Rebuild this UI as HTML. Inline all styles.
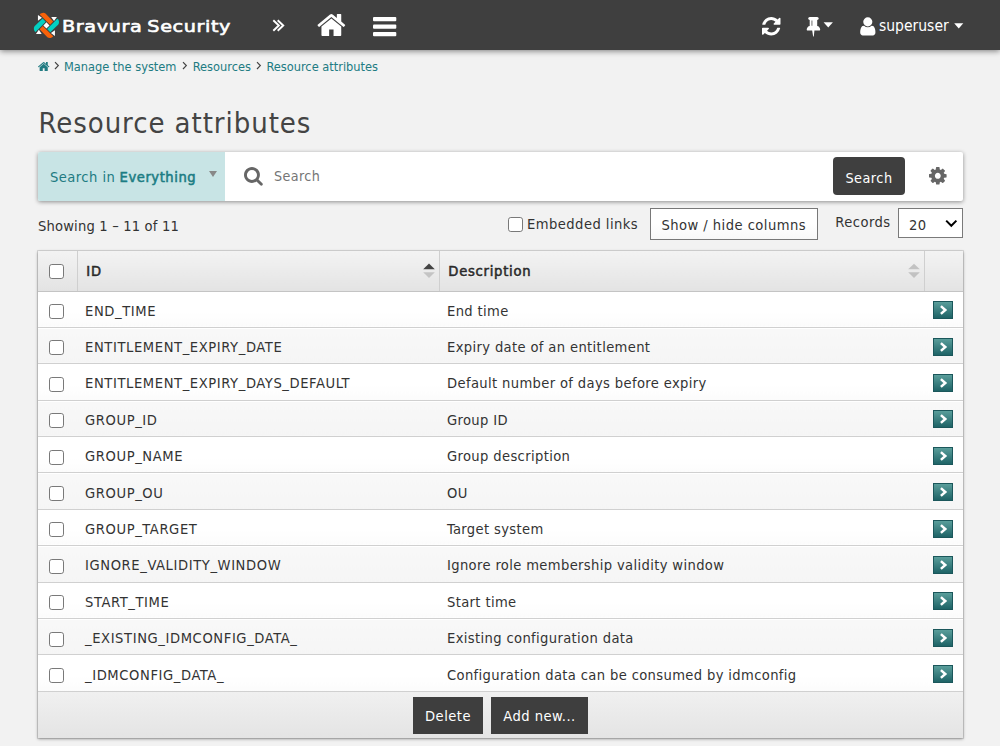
<!DOCTYPE html>
<html lang="en">
<head>
<meta charset="utf-8">
<title>Resource attributes</title>
<style>
*{box-sizing:border-box}
html,body{margin:0;padding:0}
body{width:1000px;height:746px;overflow:hidden;background:#f2f2f2;color:#333;
  font-family:"DejaVu Sans Condensed","Liberation Sans","DejaVu Sans",sans-serif;font-size:14.6px;letter-spacing:.45px;position:relative}
a{color:#217b82;text-decoration:none}
/* ---------- top bar ---------- */
#topbar{position:absolute;left:0;top:0;width:1000px;height:50px;background:#3f3f3f;box-shadow:0 1px 6px rgba(0,0,0,.5);z-index:5}
#topbar svg{position:absolute;left:0;top:0}
#brand{position:absolute;left:62px;top:12.5px;font-family:"DejaVu Sans","Liberation Sans",sans-serif;font-weight:normal;font-size:16.2px;line-height:28px;color:#fff;white-space:nowrap;letter-spacing:.5px;word-spacing:-1.4px;transform-origin:0 50%;transform:scaleX(1.188);-webkit-text-stroke:.62px #fff}
#user{position:absolute;left:879px;top:13.7px;font-size:15.5px;line-height:24px;color:#fff;white-space:nowrap;letter-spacing:0}
/* ---------- breadcrumb ---------- */
#crumbs{position:absolute;left:38px;top:56.6px;height:20px;line-height:20px;font-size:12.7px;white-space:nowrap;color:#444;letter-spacing:0}
#crumbs a{position:absolute;top:0}
#crumbs svg{position:absolute}
h1{position:absolute;left:38.5px;top:100.5px;margin:0;font-weight:normal;font-size:29px;line-height:44px;color:#444;white-space:nowrap;letter-spacing:.93px}
/* ---------- search ---------- */
#search{position:absolute;left:38px;top:152px;width:925px;height:48.5px;background:#fff;box-shadow:0 1px 4px rgba(0,0,0,.42);border-radius:2px}
#scope{position:absolute;left:0;top:0;width:187px;height:48.5px;background:#c8e4e5;color:#217b82;line-height:50.5px;padding-left:12px;white-space:nowrap;border-radius:2px 0 0 2px}
#scope b{font-weight:normal;-webkit-text-stroke:.55px #1c7d84;color:#1c7d84;letter-spacing:.55px;margin-left:-.3px}
#scope i{position:absolute;left:170.8px;top:19.4px;width:0;height:0;border-left:4.7px solid transparent;border-right:4.7px solid transparent;border-top:6.7px solid #888}
#q{position:absolute;left:236px;top:11.8px;line-height:24px;color:#757575;font-size:14.2px;letter-spacing:.4px}
#sbtn{position:absolute;left:795px;top:5px;width:72px;height:38px;background:#3f3f3f;color:#fff;border-radius:4px;text-align:center;line-height:38px;padding-top:2.2px;font-size:14.3px;letter-spacing:.5px}
#search svg{position:absolute}
/* ---------- toolbar ---------- */
#showing{position:absolute;left:38px;top:214px;line-height:24px;white-space:nowrap;letter-spacing:.17px}
#emb{position:absolute;left:508px;top:212px;line-height:24px;white-space:nowrap}
#emb i{display:inline-block;width:15px;height:15px;border:1.5px solid #797979;border-radius:2.8px;background:#fff;vertical-align:-3px;margin-right:4.5px;margin-left:-.5px}
#cols{position:absolute;left:650px;top:208px;width:167.5px;height:31.6px;border:1px solid #787878;background:linear-gradient(#fff 50%,#f8f8f8);text-align:center;line-height:29px;padding-top:1px;white-space:nowrap}
#rec{position:absolute;left:835.3px;top:210px;line-height:24px}
#sel{position:absolute;left:898px;top:208px;width:65px;height:30px;border:1px solid #7a7a7a;background:#fff;line-height:31px;padding-left:10px}
#sel svg{position:absolute;left:46px;top:10.3px}
/* ---------- table ---------- */
#grid{position:absolute;left:38px;top:251px;width:925px;height:487px;background:#fff;box-shadow:0 0 0 1px rgba(0,0,0,.1),0 1px 3px rgba(0,0,0,.38);display:flex;flex-direction:column}
table{border-collapse:collapse;width:925px;table-layout:fixed}
th{height:40px;text-align:left;font-weight:normal;-webkit-text-stroke:.55px #2a2a2a;color:#2a2a2a;font-size:14.6px;letter-spacing:.75px;background:linear-gradient(#f3f3f3,#e3e3e3);border-right:1px solid #cfcfcf;border-bottom:1px solid #c4c4c4;padding:0 0 0 8.3px;position:relative;text-shadow:0 1px 0 #fff}
th:last-child{border-right:0}
th svg{position:absolute;right:3.7px;top:12px}
td{height:36.4px;padding:2px 0 0 7.5px;border-bottom:1px solid #d0d0d0;white-space:nowrap;color:#333}
tbody td{background:linear-gradient(#fff 60%,#fbfbfb);box-shadow:inset 0 1px 0 #fff}
tr:nth-child(even) td{background:linear-gradient(#f8f8f8,#f5f5f5)}
.cb{display:block;width:15px;height:15px;border:1.5px solid #797979;border-radius:2.8px;background:#fff;margin-left:3px;position:relative;top:1.3px}
th .cb{top:1px}
.go{display:block;margin-left:1px;width:20px;height:18px;background:linear-gradient(#5a9e9b,#1e6366);border:1px solid #1b575b;position:relative}
.go svg{position:absolute;left:0;top:0}
#foot{position:relative;flex:1 1 auto;width:925px;background:linear-gradient(#f0f0f0,#e4e4e4)}
.btn{position:absolute;bottom:4.3px;height:36.7px;background:#3e3e3e;color:#fff;line-height:37px;text-align:center}
td:nth-child(2){letter-spacing:.6px}
td:nth-child(3){letter-spacing:.36px}
</style>
</head>
<body>
<div id="topbar">
  <svg width="1000" height="49" viewBox="0 0 1000 49"><g transform="translate(32 11) scale(0.04021)"><g transform="rotate(0 359 358)"><path d="M205,100 L450,340 L528,262 L335,62 Q305,38 255,47 Q205,58 195,82 Q193,92 205,100 Z" fill="#f7620b"/><path d="M148,97 L148,240 L248,170 Z" fill="#fff"/></g><g transform="rotate(90 359 358)"><path d="M205,100 L450,340 L528,262 L335,62 Q305,38 255,47 Q205,58 195,82 Q193,92 205,100 Z" fill="#03d0c2"/><path d="M148,97 L148,240 L248,170 Z" fill="#fff"/></g><g transform="rotate(180 359 358)"><path d="M205,100 L450,340 L528,262 L335,62 Q305,38 255,47 Q205,58 195,82 Q193,92 205,100 Z" fill="#f7620b"/><path d="M148,97 L148,240 L248,170 Z" fill="#fff"/></g><g transform="rotate(270 359 358)"><path d="M205,100 L450,340 L528,262 L335,62 Q305,38 255,47 Q205,58 195,82 Q193,92 205,100 Z" fill="#03d0c2"/><path d="M148,97 L148,240 L248,170 Z" fill="#fff"/></g><path d="M359,282 L435,358 L359,434 L283,358 Z" fill="#fff"/></g><g fill="none" stroke="#fff" stroke-width="1.95"><path d="M273.3,20.3 L278.8,25.5 L273.3,30.7"/><path d="M277.7,20.3 L283.2,25.5 L277.7,30.7"/></g><path fill="#fff" transform="translate(315.955 9.653) scale(0.01718)" d="M1472 992v480q0 26-19 45t-45 19h-384v-384h-256v384h-384q-26 0-45-19t-19-45v-480q0-1 .5-3t.5-3l575-474 575 474q1 2 1 6zm223-69l-62 74q-8 9-21 11h-3q-13 0-21-7l-692-577-692 577q-12 8-24 7-13-2-21-11l-62-74q-8-10-7-23.5t11-21.500l719-599q32-26 76-26t76 26l244 204v-195q0-14 9-23t23-9h192q14 0 23 9t9 23v408l219 182q10 8 11 21.500t-7 23.500z"/><g fill="#fff"><rect x="373" y="17" width="23.3" height="4.3" rx="1"/><rect x="373" y="24.5" width="23.3" height="4.3" rx="1"/><rect x="373" y="32" width="23.3" height="4.3" rx="1"/></g><path fill="#fff" transform="translate(760.458 15.458) scale(0.01204)" d="M1639 1056q0 5-1 7-64 268-268 434.500t-478 166.500q-146 0-282.500-55t-243.500-157l-129 129q-19 19-45 19t-45-19-19-45v-448q0-26 19-45t45-19h448q26 0 45 19t19 45-19 45l-137 137q71 66 161 102t187 36q134 0 250-65t186-179q11-17 53-117 8-23 30-23h192q13 0 22.500 9.500t9.500 22.500zm25-800v448q0 26-19 45t-45 19h-448q-26 0-45-19t-19-45 19-45l138-138q-148-137-349-137-134 0-250 65t-186 179q-11 17-53 117-8 23-30 23h-199q-13 0-22.500-9.500t-9.500-22.500v-7q65-268 270-434.500t480-166.500q146 0 284 55.500t245 156.500l130-129q19-19 45-19t45 19 19 45z"/><path fill="#fff" transform="translate(806.700 15.500) scale(0.01172)" d="M480 864v-448h-64v448h64zm672 352q0 26-19 45t-45 19h-429l-51 483q-2 12-10.500 20.500t-20.500 8.500h-1q-27 0-32-27l-76-485h-404q-26 0-45-19t-19-45q0-123 78.500-221.500t177.500-98.500v-512q-52 0-90-38t-38-90 38-90 90-38h640q52 0 90 38t38 90-38 90-90 38v512q99 0 177.500 98.500t78.500 221.500z"/><path fill="#fff" d="M823.6,22.3 L832.9,22.3 L828.25,27.6 Z"/><path fill="#fff" transform="translate(860.200 15.780) scale(0.01188)" d="M1280 1399q0 109-62.500 187t-150.500 78h-854q-88 0-150.500-78t-62.500-187q0-85 8.500-160.500t31.500-152 58.500-131 94-89 134.500-34.500q131 128 313 128t313-128q76 0 134.500 34.500t94 89 58.500 131 31.500 152 8.500 160.500zm-256-887q0 159-112.500 271.500t-271.500 112.500-271.500-112.500-112.500-271.500 112.500-271.500 271.500-112.500 271.500 112.500 112.500 271.500z"/><path fill="#fff" d="M954.2,23.3 L963.3,23.3 L958.75,28.6 Z"/></svg>
  <div id="brand">Bravura Security</div>
  <div id="user">superuser</div>
</div>

<div id="crumbs">
  <svg width="12" height="10" style="left:0;top:5.3px" viewBox="0 0 12 10"><path fill="#217b82" transform="translate(-0.636 -1.789) scale(0.00707)" d="M1472 992v480q0 26-19 45t-45 19h-384v-384h-256v384h-384q-26 0-45-19t-19-45v-480q0-1 .5-3t.5-3l575-474 575 474q1 2 1 6zm223-69l-62 74q-8 9-21 11h-3q-13 0-21-7l-692-577-692 577q-12 8-24 7-13-2-21-11l-62-74q-8-10-7-23.5t11-21.500l719-599q32-26 76-26t76 26l244 204v-195q0-14 9-23t23-9h192q14 0 23 9t9 23v408l219 182q10 8 11 21.500t-7 23.500z"/></svg>
  <svg width="6" height="10" style="left:15.5px;top:4.7px" viewBox="0 0 6 10"><path d="M1,1.2 L4.3,4.6 L1,8" fill="none" stroke="#444" stroke-width="1.2"/></svg>
  <a style="left:25.9px">Manage the system</a>
  <svg width="6" height="10" style="left:143.5px;top:4.7px" viewBox="0 0 6 10"><path d="M1,1.2 L4.3,4.6 L1,8" fill="none" stroke="#444" stroke-width="1.2"/></svg>
  <a style="left:154.7px">Resources</a>
  <svg width="6" height="10" style="left:218px;top:4.7px" viewBox="0 0 6 10"><path d="M1,1.2 L4.3,4.6 L1,8" fill="none" stroke="#444" stroke-width="1.2"/></svg>
  <a style="left:228.4px">Resource attributes</a>
</div>

<h1>Resource attributes</h1>

<div id="search">
  <div id="scope">Search in <b>Everything</b><i></i></div>
  <svg width="20" height="20" style="left:205.7px;top:14.9px" viewBox="0 0 20 20"><path fill="#666" transform="translate(-0.723 -1.446) scale(0.01130)" d="M1216 832q0-185-131.500-316.500t-316.500-131.500-316.500 131.500-131.500 316.500 131.500 316.500 316.500 131.500 316.500-131.500 131.500-316.500zm512 832q0 52-38 90t-90 38q-54 0-90-38l-343-342q-179 124-399 124-143 0-273.500-55.500t-225-150-150-225-55.500-273.500 55.500-273.500 150-225 225-150 273.500-55.500 273.500 55.500 225 150 150 225 55.500 273.500q0 220-124 399l343 343q37 37 37 90z"/></svg>
  <div id="q">Search</div>
  <div id="sbtn">Search</div>
  <svg width="19" height="19" style="left:891px;top:15px" viewBox="0 0 19 19"><path fill="#666" transform="translate(-1.467 -1.467) scale(0.01146)" d="M1152 896q0-106-75-181t-181-75-181 75-75 181 75 181 181 75 181-75 75-181zm512-109v222q0 12-8 23t-20 13l-185 28q-19 54-39 91 35 50 107 138 10 12 10 25t-9 23q-27 37-99 108t-94 71q-12 0-26-9l-138-108q-44 23-91 38-16 136-29 186-7 28-36 28h-222q-14 0-24.500-8.500t-11.500-21.500l-28-184q-49-16-90-37l-141 107q-10 9-25 9-14 0-25-11-126-114-165-168-7-10-7-23 0-12 8-23 15-21 51-66.500t54-70.500q-27-50-41-99l-183-27q-13-2-21-12.500t-8-23.500v-222q0-12 8-23t19-13l186-28q14-46 39-92-40-57-107-138-10-12-10-24 0-10 9-23 26-36 98.500-107.500t94.500-71.500q13 0 26 10l138 107q44-23 91-38 16-136 29-186 7-28 36-28h222q14 0 24.500 8.500t11.500 21.500l28 184q49 16 90 37l142-107q9-9 24-9 13 0 25 10 129 119 165 170 7 8 7 22 0 12-8 23-15 21-51 66.500t-54 70.500q26 50 41 98l183 28q13 2 21 12.500t8 23.500z"/></svg>
</div>

<div id="showing">Showing 1 – 11 of 11</div>
<div id="emb"><i></i>Embedded links</div>
<div id="cols">Show / hide columns</div>
<div id="rec">Records</div>
<div id="sel">20<svg width="13" height="9" viewBox="0 0 13 9"><path d="M1.2,1.6 L6.3,6.8 L11.4,1.6" fill="none" stroke="#000" stroke-width="2"/></svg></div>

<div id="grid">
<table>
<colgroup><col style="width:39.5px"><col style="width:362px"><col style="width:485px"><col style="width:38.5px"></colgroup>
<thead><tr><th style="padding-left:8px"><span class="cb"></span></th><th>ID<svg width="12" height="16" viewBox="0 0 12 16"><path d="M0.2,6.3 L11.8,6.3 L6,0.4 Z" fill="#444"/><path d="M0.2,9.3 L11.8,9.3 L6,15.1 Z" fill="#c4c4c4"/></svg></th><th>Description<svg width="12" height="16" viewBox="0 0 12 16"><path d="M0.2,6.3 L11.8,6.3 L6,0.7 Z" fill="#c2c2c2"/><path d="M0.2,9.3 L11.8,9.3 L6,14.9 Z" fill="#c2c2c2"/></svg></th><th></th></tr></thead>
<tbody>
<tr><td><span class="cb"></span></td><td>END_TIME</td><td>End time</td><td><span class="go"><svg width="18" height="16" viewBox="0 0 18 16"><path d="M6.9,4.1 L11.3,8 L6.9,11.9" fill="none" stroke="#fff" stroke-width="2.5"/></svg></span></td></tr>
<tr><td><span class="cb"></span></td><td>ENTITLEMENT_EXPIRY_DATE</td><td>Expiry date of an entitlement</td><td><span class="go"><svg width="18" height="16" viewBox="0 0 18 16"><path d="M6.9,4.1 L11.3,8 L6.9,11.9" fill="none" stroke="#fff" stroke-width="2.5"/></svg></span></td></tr>
<tr><td><span class="cb"></span></td><td>ENTITLEMENT_EXPIRY_DAYS_DEFAULT</td><td>Default number of days before expiry</td><td><span class="go"><svg width="18" height="16" viewBox="0 0 18 16"><path d="M6.9,4.1 L11.3,8 L6.9,11.9" fill="none" stroke="#fff" stroke-width="2.5"/></svg></span></td></tr>
<tr><td><span class="cb"></span></td><td>GROUP_ID</td><td>Group ID</td><td><span class="go"><svg width="18" height="16" viewBox="0 0 18 16"><path d="M6.9,4.1 L11.3,8 L6.9,11.9" fill="none" stroke="#fff" stroke-width="2.5"/></svg></span></td></tr>
<tr><td><span class="cb"></span></td><td>GROUP_NAME</td><td>Group description</td><td><span class="go"><svg width="18" height="16" viewBox="0 0 18 16"><path d="M6.9,4.1 L11.3,8 L6.9,11.9" fill="none" stroke="#fff" stroke-width="2.5"/></svg></span></td></tr>
<tr><td><span class="cb"></span></td><td>GROUP_OU</td><td>OU</td><td><span class="go"><svg width="18" height="16" viewBox="0 0 18 16"><path d="M6.9,4.1 L11.3,8 L6.9,11.9" fill="none" stroke="#fff" stroke-width="2.5"/></svg></span></td></tr>
<tr><td><span class="cb"></span></td><td>GROUP_TARGET</td><td>Target system</td><td><span class="go"><svg width="18" height="16" viewBox="0 0 18 16"><path d="M6.9,4.1 L11.3,8 L6.9,11.9" fill="none" stroke="#fff" stroke-width="2.5"/></svg></span></td></tr>
<tr><td><span class="cb"></span></td><td>IGNORE_VALIDITY_WINDOW</td><td>Ignore role membership validity window</td><td><span class="go"><svg width="18" height="16" viewBox="0 0 18 16"><path d="M6.9,4.1 L11.3,8 L6.9,11.9" fill="none" stroke="#fff" stroke-width="2.5"/></svg></span></td></tr>
<tr><td><span class="cb"></span></td><td>START_TIME</td><td>Start time</td><td><span class="go"><svg width="18" height="16" viewBox="0 0 18 16"><path d="M6.9,4.1 L11.3,8 L6.9,11.9" fill="none" stroke="#fff" stroke-width="2.5"/></svg></span></td></tr>
<tr><td><span class="cb"></span></td><td>_EXISTING_IDMCONFIG_DATA_</td><td>Existing configuration data</td><td><span class="go"><svg width="18" height="16" viewBox="0 0 18 16"><path d="M6.9,4.1 L11.3,8 L6.9,11.9" fill="none" stroke="#fff" stroke-width="2.5"/></svg></span></td></tr>
<tr><td><span class="cb"></span></td><td>_IDMCONFIG_DATA_</td><td>Configuration data can be consumed by idmconfig</td><td><span class="go"><svg width="18" height="16" viewBox="0 0 18 16"><path d="M6.9,4.1 L11.3,8 L6.9,11.9" fill="none" stroke="#fff" stroke-width="2.5"/></svg></span></td></tr>
</tbody>
</table>
<div id="foot"><div class="btn" style="left:375px;width:70px">Delete</div><div class="btn" style="left:453px;width:97px">Add new...</div></div>
</div>
</body>
</html>
